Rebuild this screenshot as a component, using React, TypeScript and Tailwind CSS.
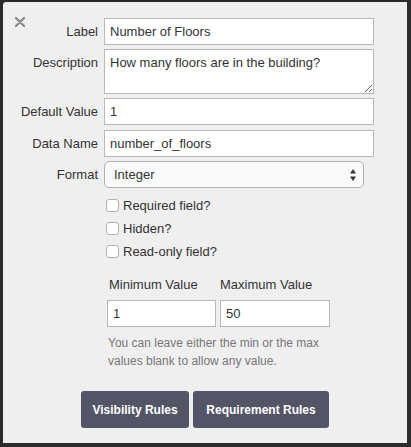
import { useState } from 'react'

const checks = ['Required field?', 'Hidden?', 'Read-only field?']

function Row({ label, children, className = '' }: { label: string; children: React.ReactNode; className?: string }) {
  return (
    <div className={`flex items-start ${className}`}>
      <label className="flex h-[27px] w-[95px] shrink-0 items-center justify-end text-[13px] text-[#333]">{label}</label>
      <div className="ml-[6px]">{children}</div>
    </div>
  )
}

const inputCls =
  'block h-[27px] w-[270px] border border-[#b8b8b8] bg-white px-[5px] text-[13px] text-[#333] outline-none'

export default function App() {
  const [label, setLabel] = useState('Number of Floors')
  const [desc, setDesc] = useState('How many floors are in the building?')
  const [def, setDef] = useState('1')
  const [name, setName] = useState('number_of_floors')
  const [min, setMin] = useState('1')
  const [max, setMax] = useState('50')

  return (
    <div className="h-[447px] w-[411px] bg-[#2b2b2b] pt-[2px] pl-[3px] font-['Liberation_Sans',Arial,sans-serif]">
      <div className="relative h-[441px] w-[404px] rounded-tl-[3px] bg-[#efefef] pt-[16px]">
        <button className="absolute left-[12px] top-[15px] text-[#8a8a8a]" aria-label="Close">
          <svg width="10" height="10" viewBox="0 0 10 10">
            <path d="M1 1L9 9M9 1L1 9" stroke="currentColor" strokeWidth="2.4" strokeLinecap="round" />
          </svg>
        </button>

        <Row label="Label">
          <input className={inputCls} value={label} onChange={(e) => setLabel(e.target.value)} />
        </Row>
        <Row label="Description" className="mt-[4px]">
          <textarea
            className="block h-[45px] w-[270px] border border-[#b8b8b8] bg-white px-[5px] pt-[4px] text-[13px] leading-[18px] text-[#333] outline-none"
            value={desc}
            onChange={(e) => setDesc(e.target.value)}
          />
        </Row>
        <Row label="Default Value" className="mt-[4px]">
          <input className={inputCls} value={def} onChange={(e) => setDef(e.target.value)} />
        </Row>
        <Row label="Data Name" className="mt-[5px]">
          <input className={inputCls} value={name} onChange={(e) => setName(e.target.value)} />
        </Row>
        <Row label="Format" className="mt-[4px]">
          <div className="relative flex h-[27px] w-[260px] items-center rounded-[5px] border border-[#b0b0b0] bg-[#fafafa] pl-[9px] text-[13px] text-[#333]">
            Integer
            <svg className="absolute right-[7px] top-[7px]" width="6" height="12" viewBox="0 0 6 12">
              <path d="M3 0L6 4.5H0Z M0 7.5H6L3 12Z" fill="#333" />
            </svg>
          </div>
        </Row>

        <div className="mt-[6px] pl-[103px]">
          {checks.map((c) => (
            <label key={c} className="flex h-[23px] items-center text-[13px] text-[#333]">
              <span className="block h-[13px] w-[13px] rounded-[3px] border border-[#b0b0b0] bg-white" />
              <span className="ml-[4px]">{c}</span>
            </label>
          ))}
        </div>

        <div className="mt-[13px] pl-[104px] text-[13px] text-[#333]">
          <div className="flex gap-[4px] leading-[18px]">
            <div className="w-[109px] pl-[2px]">Minimum Value</div>
            <div className="w-[110px]">Maximum Value</div>
          </div>
          <div className="mt-[6px] flex gap-[4px]">
            <input
              className="block h-[27px] w-[109px] border border-[#b8b8b8] bg-white px-[5px] text-[13px] outline-none"
              value={min}
              onChange={(e) => setMin(e.target.value)}
            />
            <input
              className="block h-[27px] w-[110px] border border-[#b8b8b8] bg-white px-[5px] text-[13px] outline-none"
              value={max}
              onChange={(e) => setMax(e.target.value)}
            />
          </div>
          <p className="mt-[7px] w-[232px] pl-[1px] text-[12px] leading-[18px] text-[#777]">
            You can leave either the min or the max values blank to allow any value.
          </p>
        </div>

        <div className="mt-[21px] flex justify-center gap-[4px]">
          <button className="h-[37px] w-[108px] rounded-[3px] bg-[#545467] text-[12px] font-bold text-white">
            Visibility Rules
          </button>
          <button className="h-[37px] w-[136px] rounded-[3px] bg-[#545467] text-[12px] font-bold text-white">
            Requirement Rules
          </button>
        </div>
      </div>
    </div>
  )
}
